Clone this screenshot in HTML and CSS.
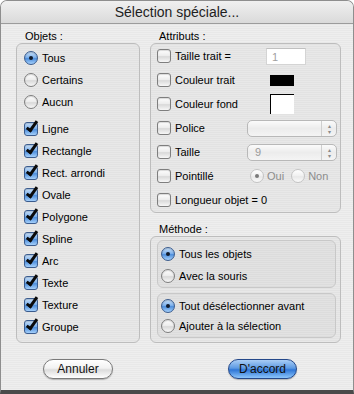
FILE: index.html
```html
<html lang="fr">

<head>
    <meta charset="UTF-8">
    <meta name="viewport" content="width=device-width, initial-scale=1.0">
    <title>Sélection spéciale</title>

    <link rel="stylesheet" href="styles.css">
</head>

<body>

    <div class="window">
        <div class="titlebar">Sélection spéciale...</div>

        <div class="content">
            <section class="col">
                <div class="label">Objets :</div>
                <div class="box objets">
                    <div class="row"><span class="radio on"></span>Tous</div>
                    <div class="row"><span class="radio"></span>Certains</div>
                    <div class="row"><span class="radio"></span>Aucun</div>
                    <div class="sep"></div>
                    <div class="row"><span class="check on"></span>Ligne</div>
                    <div class="row"><span class="check on"></span>Rectangle</div>
                    <div class="row"><span class="check on"></span>Rect. arrondi</div>
                    <div class="row"><span class="check on"></span>Ovale</div>
                    <div class="row"><span class="check on"></span>Polygone</div>
                    <div class="row"><span class="check on"></span>Spline</div>
                    <div class="row"><span class="check on"></span>Arc</div>
                    <div class="row"><span class="check on"></span>Texte</div>
                    <div class="row"><span class="check on"></span>Texture</div>
                    <div class="row"><span class="check on"></span>Groupe</div>
                </div>
            </section>

            <section class="col">
                <div class="label">Attributs :</div>
                <div class="box attrs">
                    <div class="arow">
                        <span class="name"><span class="check"></span>Taille trait =</span>
                        <span class="field">1</span>
                    </div>
                    <div class="arow">
                        <span class="name"><span class="check"></span>Couleur trait</span>
                        <span class="swatch black"></span>
                    </div>
                    <div class="arow">
                        <span class="name"><span class="check"></span>Couleur fond</span>
                        <span class="swatch white"></span>
                    </div>
                    <div class="arow">
                        <span class="name"><span class="check"></span>Police</span>
                        <span class="popup"><span class="value"></span><span class="arrows">▴<br>▾</span></span>
                    </div>
                    <div class="arow">
                        <span class="name"><span class="check"></span>Taille</span>
                        <span class="popup"><span class="value">9</span><span class="arrows">▴<br>▾</span></span>
                    </div>
                    <div class="arow">
                        <span class="name"><span class="check"></span>Pointillé</span>
                        <span class="choices">
                            <span class="opt"><span class="radio off on"></span>Oui</span>
                            <span class="opt"><span class="radio off"></span>Non</span>
                        </span>
                    </div>
                    <div class="arow">
                        <span class="name wide"><span class="check"></span>Longueur objet = 0</span>
                    </div>
                </div>

                <div class="label method">Méthode :</div>
                <div class="box methode">
                    <div class="box inner first">
                        <div class="row"><span class="radio on"></span>Tous les objets</div>
                        <div class="row"><span class="radio"></span>Avec la souris</div>
                    </div>
                    <div class="box inner second">
                        <div class="row"><span class="radio on"></span>Tout désélectionner avant</div>
                        <div class="row"><span class="radio"></span>Ajouter à la sélection</div>
                    </div>
                </div>
            </section>
        </div>

        <div class="buttons">
            <div class="cell"><button class="btn cancel" type="button">Annuler</button></div>
            <div class="cell"><button class="btn ok" type="button">D'accord</button></div>
        </div>
    </div>

</body>

</html>
```

FILE: styles.css
```css
*,
*::after {
    box-sizing: border-box;
    margin: 0;
    padding: 0;
}

html,
body {
    height: 100%;
}

body {
    background: #ffffff;
    font-family: "Liberation Sans", Arial, sans-serif;
    font-size: 11px;
    color: #000;
}

.window {
    width: 354px;
    height: 394px;
    display: flex;
    flex-direction: column;
    border: 1px solid #8e8e8e;
    border-bottom: 4px solid #4a4a4a;
    border-radius: 7px 7px 0 0;
    overflow: hidden;
    background: repeating-linear-gradient(to bottom, #eeeeee 0 1px, #e8e8e8 1px 2px);
}

.titlebar {
    height: 23px;
    flex: none;
    text-align: center;
    font-size: 14px;
    line-height: 23px;
    color: #1e1e1e;
    background: linear-gradient(#f0f0f0, #dadada);
    border-bottom: 1px solid #9c9c9c;
}

.content {
    display: grid;
    grid-template-columns: 124px 191px;
    column-gap: 10px;
    padding: 5px 0 0 15px;
}

.label {
    height: 14px;
    line-height: 14px;
    padding-left: 9px;
}

.label.method {
    margin-top: 9px;
}

.box {
    border: 1px solid #bdbdbd;
    border-radius: 6px;
    background: rgba(0, 0, 0, 0.025);
}

.objets {
    padding: 3px 0 4px 7px;
}

.row {
    height: 22px;
    display: flex;
    align-items: center;
    gap: 4px;
    white-space: nowrap;
}

.sep {
    height: 5px;
}

.attrs {
    padding: 0 0 0 6px;
}

.arow {
    height: 24px;
    display: flex;
    align-items: center;
}

.name {
    width: 90px;
    display: flex;
    align-items: center;
    gap: 4px;
    white-space: nowrap;
}

.name.wide {
    width: auto;
}

.field {
    width: 40px;
    height: 17px;
    margin-left: 19px;
    padding-left: 5px;
    line-height: 16px;
    color: #a0a0a0;
    background: #fff;
    border: 1px solid #d4d4d4;
    border-top-color: #c0c0c0;
}

.swatch {
    width: 24px;
    margin-left: 23px;
}

.swatch.black {
    height: 11px;
    background: #000;
}

.swatch.white {
    height: 20px;
    background: #fff;
    border-top: 1px solid #000;
    border-left: 1px solid #000;
}

.popup {
    width: 90px;
    height: 17px;
    display: flex;
    border: 1px solid #b8b8b8;
    border-radius: 5px;
    background: linear-gradient(#fbfbfb, #ececec 50%, #f4f4f4);
    color: #9a9a9a;
}

.popup .value {
    flex: 1;
    padding-left: 7px;
    line-height: 15px;
}

.popup .arrows {
    width: 15px;
    border-left: 1px solid #cfcfcf;
    font-size: 6px;
    line-height: 6px;
    text-align: center;
    padding-top: 2px;
    color: #8a8a8a;
}

.choices {
    display: flex;
    gap: 7px;
    margin-left: 3px;
    color: #8c8c8c;
}

.opt {
    display: flex;
    align-items: center;
    gap: 3px;
}

.methode {
    padding: 3px 4px 4px 6px;
}

.inner {
    border-color: #c8c8c8;
    padding-left: 3px;
}

.inner.first {
    padding-top: 2px;
}

.inner.second {
    margin-top: 5px;
    padding: 2px 0 1px 3px;
}

.inner.second .row {
    height: 20px;
}

/* aqua controls */

.check,
.radio {
    position: relative;
    flex: none;
    width: 14px;
    height: 14px;
    border: 1px solid #7e7e7e;
    background: linear-gradient(#ffffff, #ebebeb 50%, #d9d9d9 55%, #f7f7f7);
    box-shadow: inset 0 1px 1px rgba(0, 0, 0, 0.15);
}

.check {
    border-radius: 3px;
}

.radio {
    border-radius: 50%;
}

.check.on,
.radio.on {
    border-color: #3b5c8e;
    background: linear-gradient(#c9e1fa, #7fb2ec 45%, #4f8fdc 55%, #a5d0fb);
}

.check.on::after {
    content: '';
    position: absolute;
    left: 4px;
    top: -4px;
    width: 6px;
    height: 13px;
    border-right: 3px solid #0a0a0a;
    border-bottom: 3px solid #0a0a0a;
    transform: rotate(35deg);
}

.radio.on::after {
    content: '';
    position: absolute;
    left: 4px;
    top: 4px;
    width: 4px;
    height: 4px;
    border-radius: 50%;
    background: #111a2a;
}

.radio.off {
    border-color: #c4c4c4;
    background: linear-gradient(#ffffff, #f0f0f0 50%, #e8e8e8 55%, #fafafa);
    box-shadow: none;
}

.radio.off.on::after {
    background: #7a7a7a;
}

/* buttons */

.buttons {
    display: grid;
    grid-template-columns: 124px 191px;
    column-gap: 10px;
    padding: 16px 0 0 15px;
}

.cell {
    display: flex;
    justify-content: center;
}

.cell:last-child {
    justify-content: flex-start;
    padding-left: 78px;
}

.btn {
    width: 70px;
    height: 20px;
    border-radius: 10px;
    font-family: "Liberation Sans", Arial, sans-serif;
    font-size: 12px;
    color: #111;
    box-shadow: 0 1px 1px rgba(0, 0, 0, 0.25);
}

.cancel {
    border: 1px solid #7a7a7a;
    background: linear-gradient(#ffffff, #f2f2f2 45%, #dcdcdc 55%, #ffffff);
}

.ok {
    width: 69px;
    border: 1px solid #24488a;
    background: linear-gradient(#a9cdf5, #5d9ae3 45%, #2f76d6 55%, #8cc5fb);
}
```
